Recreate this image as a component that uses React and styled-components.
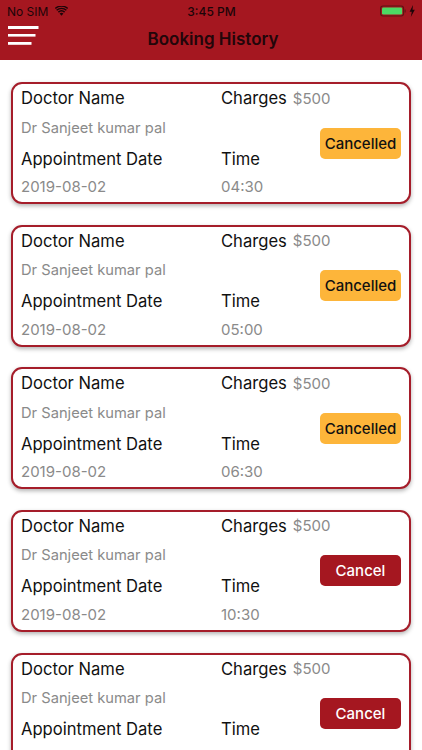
import styled, { createGlobalStyle } from "styled-components";

const bookings = [
  { time: "04:30", cancelled: true },
  { time: "05:00", cancelled: true },
  { time: "06:30", cancelled: true },
  { time: "10:30", cancelled: false },
  { time: "11:00", cancelled: false },
];

function App() {
  return (
    <Page>
      <GlobalStyle />
      <Header>
        <StatusBar>
          <StatusLeft>
            No SIM
            <svg width="13" height="10" viewBox="0 0 15 11">
              <path d="M7.5 11 5.3 8.4a3.3 3.3 0 0 1 4.4 0Z" fill="#1c0508" />
              <path d="M3.9 6.8a5.5 5.5 0 0 1 7.2 0" fill="none" stroke="#1c0508" strokeWidth="1.7" />
              <path d="M1.9 4.6a8.4 8.4 0 0 1 11.2 0" fill="none" stroke="#1c0508" strokeWidth="1.7" />
              <path d="M.3 2.5a11 11 0 0 1 14.4 0" fill="none" stroke="#1c0508" strokeWidth="1.5" />
            </svg>
          </StatusLeft>
          <StatusTime>3:45 PM</StatusTime>
          <StatusRight>
            <svg width="36" height="12" viewBox="0 0 36 12">
              <rect x="0.6" y="1" width="23" height="10" rx="2.5" fill="none" stroke="#5e1414" strokeWidth="1.1" />
              <rect x="2" y="2.4" width="20.2" height="7.2" rx="1.4" fill="#4cd964" />
              <rect x="24.6" y="4.5" width="1" height="3" fill="#5e1414" />
              <path d="M33 0 29.6 6.8h2.2L30.8 12l4-7.2h-2.3Z" fill="#1c0508" />
            </svg>
          </StatusRight>
        </StatusBar>
        <NavBar>
          <MenuButton>
            <svg width="31" height="19" viewBox="0 0 31 19">
              <rect x="0" y="0" width="30.5" height="3" fill="#fff" />
              <rect x="0" y="8" width="27.5" height="2.6" fill="#fff" />
              <rect x="0" y="16" width="23.5" height="2.8" fill="#fff" />
            </svg>
          </MenuButton>
          <Title>Booking History</Title>
        </NavBar>
      </Header>
      <List>
        {bookings.map((item) => (
          <Card key={item.time}>
            <Info>
              <Label>Doctor Name</Label>
              <ChargeRow>
                <Label>Charges</Label>
                <Value>$500</Value>
              </ChargeRow>
              <DoctorValue>Dr Sanjeet kumar pal</DoctorValue>
              <Label>Appointment Date</Label>
              <Label>Time</Label>
              <Value>2019-08-02</Value>
              <Value>{item.time}</Value>
            </Info>
            <ActionButton $cancelled={item.cancelled}>
              {item.cancelled ? "Cancelled" : "Cancel"}
            </ActionButton>
          </Card>
        ))}
      </List>
    </Page>
  );
}

export default App;

const GlobalStyle = createGlobalStyle`
  html, body {
    margin: 0;
    padding: 0;
    height: 100%;
    overflow: hidden;
    background: #fff;
  }
  body {
    font-family: Inter, "Liberation Sans", sans-serif;
  }
`;

const Page = styled.div`
  width: 422px;
  height: 750px;
  overflow: hidden;
  background: #fff;
`;

const Header = styled.header`
  height: 60px;
  background: #a51720;
  color: #1c0508;
`;

const StatusBar = styled.div`
  height: 21px;
  padding: 0 6px 0 7px;
  display: grid;
  grid-template-columns: 1fr auto 1fr;
  align-items: center;
  font-size: 12px;
`;

const StatusLeft = styled.div`
  display: flex;
  align-items: center;
  gap: 7px;
  margin-top: 1px;
`;

const StatusTime = styled.div`
  font-weight: 500;
  margin-top: 1px;
`;

const StatusRight = styled.div`
  display: flex;
  justify-content: flex-end;
  margin-top: 1px;
`;

const NavBar = styled.div`
  height: 39px;
  position: relative;
  display: flex;
  align-items: center;
  justify-content: center;
`;

const MenuButton = styled.div`
  position: absolute;
  left: 8px;
  top: 5px;
  line-height: 0;
`;

const Title = styled.h1`
  margin: 0 0 4px 4px;
  font-size: 17px;
  font-weight: 600;
  color: #22060a;
`;

const List = styled.main`
  padding: 22px 11px 0;
  display: flex;
  flex-direction: column;
  gap: 20.67px;
`;

const Card = styled.article`
  flex: none;
  box-sizing: border-box;
  height: 122px;
  padding: 0 8px;
  display: flex;
  align-items: center;
  justify-content: space-between;
  background: #fff;
  border: 2px solid #a51d2a;
  border-radius: 11px;
  box-shadow: 0 2px 4px rgba(0, 0, 0, 0.3);
`;

const Info = styled.div`
  align-self: flex-start;
  display: grid;
  grid-template-columns: 200px 99px;
  grid-template-rows: 28px 31px 31px 25px;
  align-items: center;
  white-space: nowrap;
`;

const ChargeRow = styled.div`
  display: flex;
  align-items: center;
  gap: 6px;
`;

const Label = styled.span`
  font-size: 16.6px;
  color: #111;
`;

const Value = styled.span`
  font-size: 15px;
  color: #8a8a8a;
`;

const DoctorValue = styled(Value)`
  grid-column: 1 / -1;
  font-size: 14.7px;
`;

const ActionButton = styled.button`
  flex: none;
  width: 81px;
  height: 31px;
  padding: 0;
  border: none;
  border-radius: 5px;
  font-family: inherit;
  font-size: 15px;
  font-weight: 500;
  background: ${(p) => (p.$cancelled ? "#fdb53a" : "#a51720")};
  color: ${(p) => (p.$cancelled ? "#111" : "#fff")};
`;
